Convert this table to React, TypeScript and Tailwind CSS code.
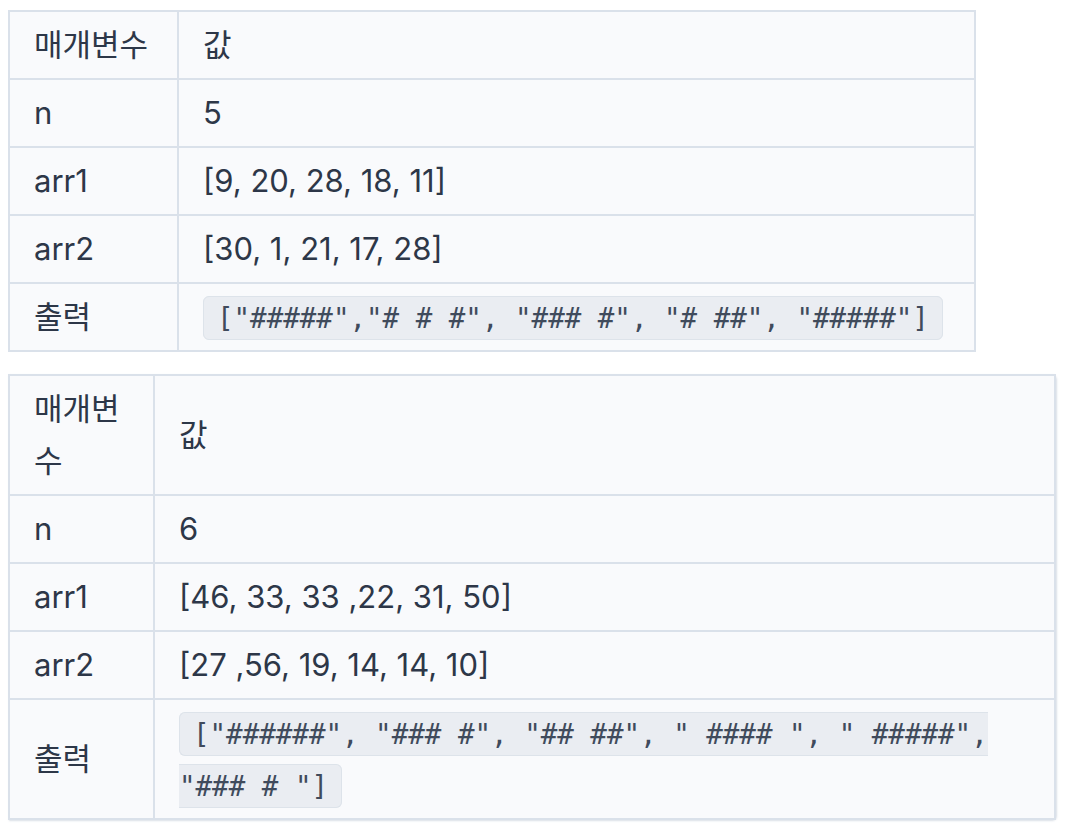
import React from 'react';

type Row = { name: string; value: React.ReactNode };

const Code = ({ children }: { children: string }) => (
  <code className="rounded-[6px] border border-[#dde3ea] bg-[#eaedf2] px-[13px] py-[5px] font-['DejaVu_Sans_Mono',monospace] text-[27.5px] leading-[36px] text-[#404b5c]">
    {children}
  </code>
);

const cellBase = 'border-2 border-[#dae1ea] px-[24px] py-[7px] align-middle text-left font-normal';

function ParamTable({ rows, width, firstCol, wrap }: { rows: Row[]; width: string; firstCol: string; wrap?: boolean }) {
  return (
    <div className={wrap ? 'rounded-r-[5px] shadow-[1px_1px_2px_rgba(148,163,184,0.35)]' : ''} style={{ width }}>
      <table className="w-full border-collapse bg-[#f9fafc]">
        <thead>
          <tr>
            <th className={cellBase} style={{ width: firstCol }}>매개변수</th>
            <th className={cellBase}>값</th>
          </tr>
        </thead>
        <tbody>
          {rows.map((r) => (
            <tr key={r.name}>
              <td className={cellBase}>{r.name}</td>
              <td className={cellBase}>{r.value}</td>
            </tr>
          ))}
        </tbody>
      </table>
    </div>
  );
}

export default function App() {
  const first: Row[] = [
    { name: 'n', value: '5' },
    { name: 'arr1', value: '[9, 20, 28, 18, 11]' },
    { name: 'arr2', value: '[30, 1, 21, 17, 28]' },
    { name: '출력', value: <Code>{'["#####","# # #", "### #", "# ##", "#####"]'}</Code> },
  ];
  const second: Row[] = [
    { name: 'n', value: '6' },
    { name: 'arr1', value: '[46, 33, 33 ,22, 31, 50]' },
    { name: 'arr2', value: '[27 ,56, 19, 14, 14, 10]' },
    { name: '출력', value: <Code>{'["######", "### #", "## ##", " #### ", " #####", "### # "]'}</Code> },
  ];

  return (
    <div className="min-h-screen bg-white px-[8px] pt-[10px] font-['Inter','Noto_Sans_CJK_KR',sans-serif] text-[31px] leading-[52px] text-[#2d3748]">
      <ParamTable rows={first} width="968px" firstCol="169px" />
      <div className="h-[22px]" />
      <ParamTable rows={second} width="1048px" firstCol="145px" wrap />
    </div>
  );
}
